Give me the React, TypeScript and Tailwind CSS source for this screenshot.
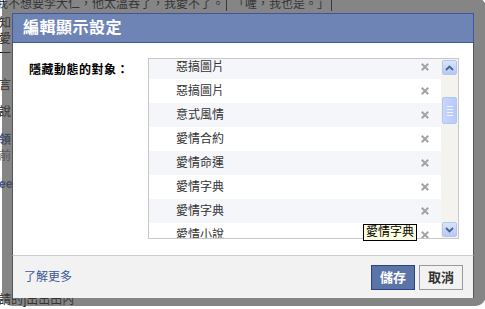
import React from 'react';

const items = ['惡搞圖片', '惡搞圖片', '意式風情', '愛情合約', '愛情命運', '愛情字典', '愛情字典', '愛情小說'];

const font = "font-['Liberation_Sans','Noto_Sans_CJK_TC',sans-serif]";

const Icons = {
  Remove: () => (
    <svg viewBox="0 0 8 8" className="w-[8px] h-[8px]" fill="none" stroke="#a3a3a3" strokeWidth="2" strokeLinecap="square">
      <path d="M1.5 1.5 6.5 6.5M6.5 1.5 1.5 6.5" />
    </svg>
  ),
  Up: () => (
    <svg viewBox="0 0 9 6" className="w-[9px] h-[6px]" fill="none" stroke="#4d6185" strokeWidth="1.8">
      <path d="M1 5 4.5 1.5 8 5" />
    </svg>
  ),
  Down: () => (
    <svg viewBox="0 0 9 6" className="w-[9px] h-[6px]" fill="none" stroke="#4d6185" strokeWidth="1.8">
      <path d="M1 1 4.5 4.5 8 1" />
    </svg>
  ),
};

const ScrollButton: React.FC<{ children: React.ReactNode }> = ({ children }) => (
  <div className="w-[15px] h-[15px] mx-auto rounded-[2px] border border-[#b3c6f2] bg-gradient-to-b from-[#d9e4fd] to-[#b4c8f6] flex items-center justify-center">
    {children}
  </div>
);

export default function App() {
  return (
    <div className={`relative w-[485px] h-[309px] overflow-hidden bg-white ${font}`}>
      {/* page behind the dialog */}
      <div className="text-[12px] leading-[14px] text-[#111] mt-[-3px] ml-[-4px] whitespace-nowrap flex">
        <span>我不想要李大仁，他太溫吞了，我愛不了。</span>
        <span className="border-l border-[#222] pl-[6px] ml-[2px]">「喔，我也是。」</span>
        <span className="border-l border-[#222] ml-[2px]"></span>
      </div>
      <div className="flex flex-col text-[12px] leading-[14px] text-[#111] ml-[-1px] mt-[5px] gap-y-[2px]">
        <span>知</span>
        <span>愛</span>
        <span className="mt-[-1px]">一</span>
        <span className="mt-[15px]">言</span>
        <span className="mt-[11px]">說</span>
        <span className="mt-[12px] text-[#3b5998] font-bold">領</span>
        <span className="text-[#777]">前</span>
        <span className="mt-[12px] text-[#3b5998] font-bold">ee</span>
        <span className="mt-[100px]">請的]出出田內</span>
      </div>

      {/* translucent frame */}
      <div className="absolute left-[2px] top-[-3px] w-[484px] h-[309px] rounded-[11px] bg-[rgba(70,70,70,0.66)]" />

      {/* dialog */}
      <div className="absolute left-[12px] top-[13px] w-[462px] h-[285px] flex flex-col bg-white">
        <div className="h-[30px] shrink-0 bg-[#6d84b4] border border-[#3b5998] flex items-center pl-[10px]">
          <span className="text-white font-bold text-[16px] tracking-[0.5px] leading-none">編輯顯示設定</span>
        </div>

        <div className="flex-1 flex pt-[15px] pl-[16px] border-x border-[#555]">
          <div className="w-[119px] shrink-0 pt-[5px] text-[12px] leading-[14px] font-bold text-black tracking-[0.5px]">
            隱藏動態的對象：
          </div>
          <div className="w-[311px] h-[181px] border border-[#c8c8c8] flex overflow-hidden">
            <div className="flex-1 overflow-hidden">
              <div className="mt-[-4px]">
                {items.map((t, i) => (
                  <div
                    key={i}
                    className={`h-[24px] flex items-center justify-between pl-[27px] pr-[12px] text-[12px] text-[#333] ${i % 2 === 0 ? 'bg-[#f5f6fa]' : 'bg-white'}`}
                  >
                    <span>{t}</span>
                    <Icons.Remove />
                  </div>
                ))}
              </div>
            </div>
            <div className="w-[17px] shrink-0 bg-[#f4f3ed] flex flex-col pt-[1px] pb-[1px]">
              <ScrollButton><Icons.Up /></ScrollButton>
              <div className="mt-[22px] w-[15px] h-[27px] mx-auto rounded-[2px] border border-[#b3c6f2] bg-gradient-to-r from-[#c8d6fb] to-[#b7caf7] flex flex-col items-center justify-center gap-[2px]">
                <div className="w-[6px] h-px bg-[#eef3ff]" />
                <div className="w-[6px] h-px bg-[#eef3ff]" />
                <div className="w-[6px] h-px bg-[#eef3ff]" />
                <div className="w-[6px] h-px bg-[#eef3ff]" />
              </div>
              <div className="flex-1" />
              <ScrollButton><Icons.Down /></ScrollButton>
            </div>
          </div>
        </div>

        <div className="h-[43px] shrink-0 bg-[#f2f2f2] border-t border-[#cccccc] border-x border-x-[#555] flex items-center justify-between pl-[11px] pr-[10px]">
          <span className="text-[12px] text-[#3b5998]">了解更多</span>
          <div className="flex gap-[4px]">
            <button className="w-[44px] h-[25px] bg-[#5b74a8] border border-[#29447e] text-white font-bold text-[13px] leading-none">儲存</button>
            <button className="w-[44px] h-[25px] bg-[#f2f2f2] border border-[#999] text-[#333] font-bold text-[13px] leading-none">取消</button>
          </div>
        </div>
      </div>

      {/* tooltip */}
      <div className="absolute left-[363px] top-[224px] h-[17px] px-[2px] bg-[#ffffe1] border border-black text-[12px] leading-[15px] text-black">
        愛情字典
      </div>
    </div>
  );
}
